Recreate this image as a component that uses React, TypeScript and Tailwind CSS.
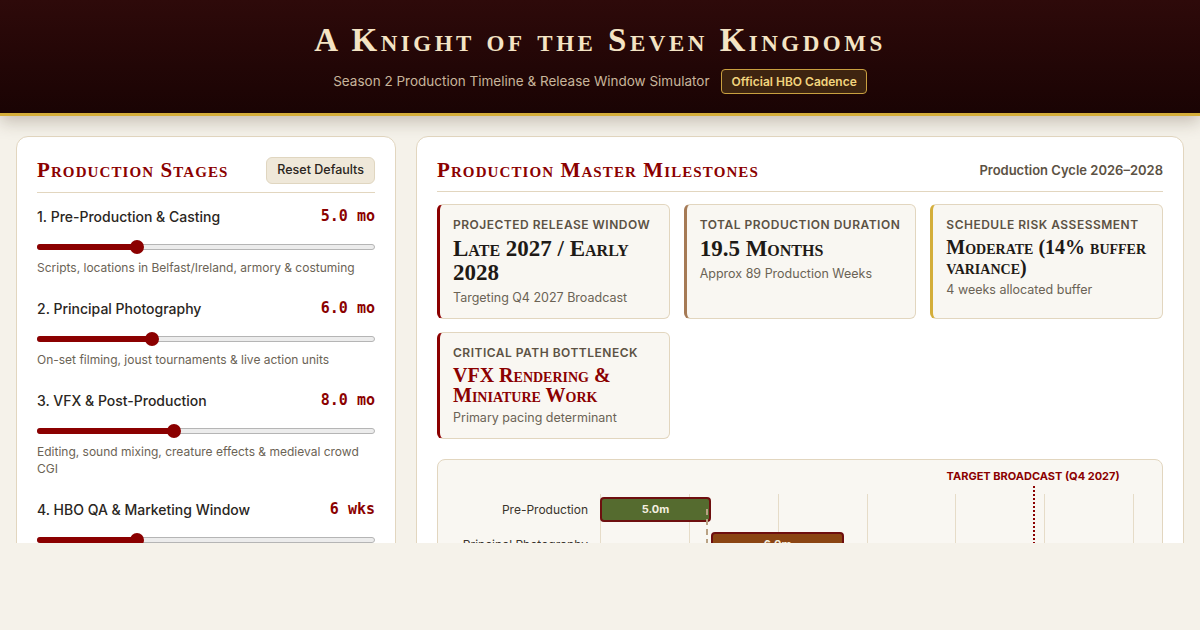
import React from "react";

const SERIF = "font-['Liberation_Serif','DejaVu_Serif',serif] [font-variant:small-caps]";

type Stage = { title: string; value: string; pct: number; desc: string };

const STAGES: Stage[] = [
  { title: "1. Pre-Production & Casting", value: "5.0 mo", pct: 29.6, desc: "Scripts, locations in Belfast/Ireland, armory & costuming" },
  { title: "2. Principal Photography", value: "6.0 mo", pct: 34, desc: "On-set filming, joust tournaments & live action units" },
  { title: "3. VFX & Post-Production", value: "8.0 mo", pct: 40.5, desc: "Editing, sound mixing, creature effects & medieval crowd CGI" },
  { title: "4. HBO QA & Marketing Window", value: "6 wks", pct: 29.6, desc: "Final grading, trailers & press tour" },
];

type Stat = { label: string; value: string; sub: string; accent: string; big?: boolean; red?: boolean };

const STATS: Stat[] = [
  { label: "Projected Release Window", value: "Late 2027 / Early 2028", sub: "Targeting Q4 2027 Broadcast", accent: "border-l-[#8b0000]", big: true },
  { label: "Total Production Duration", value: "19.5 Months", sub: "Approx 89 Production Weeks", accent: "border-l-[#a57a55]", big: true },
  { label: "Schedule Risk Assessment", value: "Moderate (14% buffer variance)", sub: "4 weeks allocated buffer", accent: "border-l-[#d4ae3a]" },
  { label: "Critical Path Bottleneck", value: "VFX Rendering & Miniature Work", sub: "Primary pacing determinant", accent: "border-l-[#8b0000]", red: true },
];

const BARS = [
  { label: "Pre-Production", start: 0, len: 5, color: "bg-[#556b2f]" },
  { label: "Principal Photography", start: 5, len: 6, color: "bg-[#8b4513]" },
  { label: "VFX & Post", start: 11, len: 8, color: "bg-[#4a3a6b]" },
];

const MONTHS = 24;

function Slider({ pct }: { pct: number }) {
  return (
    <div className="relative h-[14px] mt-[14px] flex items-center">
      <div className="w-full h-[6px] rounded-full bg-[#ececec] border border-[#b5b5b5]" />
      <div className="absolute left-0 h-[6px] rounded-full bg-[#8b0000]" style={{ width: `${pct}%` }} />
      <div
        className="absolute w-[14px] h-[14px] rounded-full bg-[#8b0000] -translate-x-1/2"
        style={{ left: `${pct}%` }}
      />
    </div>
  );
}

export default function App() {
  return (
    <div className="w-[1200px] h-[630px] bg-[#f5f2ea] font-['Inter','Liberation_Sans',sans-serif] overflow-hidden">
      <header className="relative z-10 h-[116px] bg-gradient-to-b from-[#2e0a0a] to-[#1a0404] border-b-[3px] border-[#d4ae3a] shadow-[0_6px_16px_rgba(60,40,20,0.25)] flex flex-col items-center pt-[21px]">
        <h1 className={`${SERIF} font-bold text-[33px] leading-[38px] tracking-[3.5px] text-[#f4e4c4]`}>
          A Knight of the Seven Kingdoms
        </h1>
        <div className="flex items-center gap-3 mt-[10px]">
          <span className="text-[13.5px] text-[#c8b59b]">Season 2 Production Timeline &amp; Release Window Simulator</span>
          <span className="px-[9px] h-[25px] flex items-center rounded border border-[#c9a040] bg-[#3e2410] text-[12px] font-semibold text-[#f2d47e]">
            Official HBO Cadence
          </span>
        </div>
      </header>

      <main className="h-[427px] overflow-hidden px-4 pt-5 flex gap-5 items-start">
        <section className="w-[380px] shrink-0 bg-white border border-[#e2d6bf] rounded-xl px-5 pt-5 pb-6">
          <div className="flex items-center justify-between pb-2 border-b border-[#e2d6bf]">
            <h2 className={`${SERIF} font-bold text-[21px] leading-[27px] tracking-[1.1px] text-[#8b0000]`}>Production Stages</h2>
            <button className="h-[27px] px-2.5 rounded-md bg-[#efe8d9] border border-[#e0d6c0] text-[12.5px] font-medium text-[#2a2520]">
              Reset Defaults
            </button>
          </div>
          <div className="flex flex-col gap-[22px] mt-[13px]">
            {STAGES.map((s) => (
              <div key={s.title}>
                <div className="flex items-center justify-between h-5">
                  <span className="text-[14px] font-medium text-[#2a2622]">{s.title}</span>
                  <span className="font-['DejaVu_Sans_Mono',monospace] font-bold text-[15px] text-[#8b0000]">{s.value}</span>
                </div>
                <Slider pct={s.pct} />
                <p className="mt-[5px] text-[12px] leading-[17px] text-[#6b6355]">{s.desc}</p>
              </div>
            ))}
          </div>
        </section>

        <section className="flex-1 bg-white border border-[#e2d6bf] rounded-xl px-5 pt-5 pb-6">
          <div className="flex items-center justify-between h-[27px]">
            <h2 className={`${SERIF} font-bold text-[21px] leading-[27px] tracking-[1.1px] text-[#8b0000]`}>Production Master Milestones</h2>
            <span className="text-[13px] font-semibold text-[#5c5244]">Production Cycle 2026–2028</span>
          </div>
          <div className="mt-[7px] border-b border-[#e2d6bf]" />

          <div className="grid grid-cols-3 gap-x-[14px] gap-y-[13px] mt-[12px]">
            {STATS.map((s) => (
              <div
                key={s.label}
                className={`bg-[#f9f7f2] border border-[#e2d6bf] border-l-[3px] ${s.accent} rounded-md pl-[13px] pr-3 pt-[12px] pb-[11px]`}
              >
                <div className="text-[12px] leading-4 font-semibold uppercase tracking-[0.5px] text-[#5c5244]">{s.label}</div>
                <div
                  className={`${SERIF} font-bold mt-[4px] ${
                    s.big ? "text-[23px] leading-[24px]" : "text-[20px] leading-[20px]"
                  } ${s.red ? "text-[#8b0000]" : "text-[#1e1a16]"}`}
                >
                  {s.value}
                </div>
                <div className="mt-[4px] text-[12.5px] leading-[18px] text-[#6b6355]">{s.sub}</div>
              </div>
            ))}
          </div>

          <div className="mt-[20px] bg-[#f9f7f2] border border-[#e2d6bf] rounded-lg pt-[7px] pr-[29px] pb-4 pl-4">
            <div className="flex">
              <div className="w-[134px] shrink-0" />
              <div className="ml-3 flex-1 relative h-[18px]">
                <span
                  className="absolute -translate-x-1/2 text-[11px] leading-[18px] font-bold text-[#8b0000] whitespace-nowrap"
                  style={{ left: `${(19.5 / MONTHS) * 100}%` }}
                >
                  TARGET BROADCAST (Q4 2027)
                </span>
              </div>
            </div>
            <div className="flex mt-[9px]">
              <div className="w-[134px] shrink-0 flex flex-col gap-[10px] pt-[3px]">
                {BARS.map((b) => (
                  <div key={b.label} className="h-[25px] flex items-center justify-end text-[12px] text-[#3a342c]">
                    {b.label}
                  </div>
                ))}
              </div>
              <div className="ml-3 flex-1 relative pt-[3px]">
                {[0, 4, 8, 12, 16, 20, 24].map((m) => (
                  <div
                    key={m}
                    className="absolute top-0 bottom-0 w-px bg-[#e6dcc8]"
                    style={{ left: `${(m / MONTHS) * 100}%` }}
                  />
                ))}
                <div
                  className="absolute -top-[8px] bottom-0 border-l-2 border-dotted border-[#8b0000]"
                  style={{ left: `${(19.5 / MONTHS) * 100}%` }}
                />
                <div className="relative flex flex-col gap-[10px]">
                  {BARS.map((b, i) => (
                    <div key={b.label} className="relative h-[25px]">
                      <div
                        className={`absolute top-0 h-[25px] rounded ${b.color} border-2 border-[#6e0f0f] flex items-center justify-center text-[11px] font-bold text-[#f5efe0]`}
                        style={{ left: `${(b.start / MONTHS) * 100}%`, width: `${(b.len / MONTHS) * 100}%` }}
                      >
                        {b.len.toFixed(1)}m
                      </div>
                      {i < BARS.length - 1 && (
                        <div
                          className="absolute top-[12px] h-[36px] border-l-2 border-dashed border-[#b9a284]"
                          style={{ left: `calc(${((b.start + b.len) / MONTHS) * 100}% - 5px)` }}
                        />
                      )}
                    </div>
                  ))}
                </div>
              </div>
            </div>
          </div>
        </section>
      </main>
    </div>
  );
}
